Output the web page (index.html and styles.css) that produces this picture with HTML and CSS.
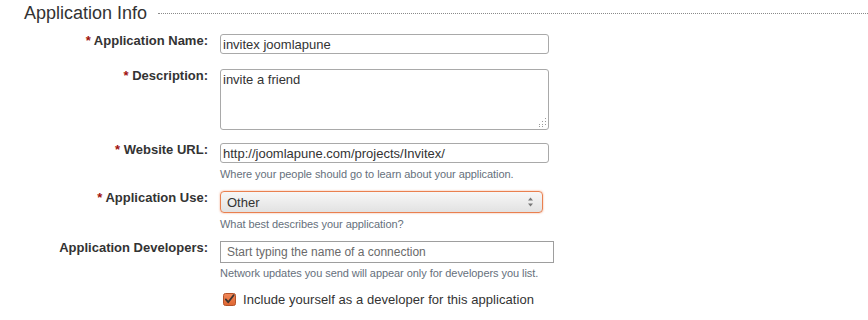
FILE: index.html
```html
<!DOCTYPE html>
<html>
<head>
<meta charset="utf-8">
<link rel="stylesheet" href="styles.css">
</head>
<body>
<div class="page">
  <div class="legend"><span class="legend-text">Application Info</span><span class="legend-line"></span></div>

  <div class="row r1">
    <div class="label"><span class="req">*</span> Application Name:</div>
    <div class="field"><input class="text w329" type="text" value="invitex joomlapune"></div>
  </div>

  <div class="row r2">
    <div class="label"><span class="req">*</span> Description:</div>
    <div class="field">
      <div class="ta-wrap">
        <textarea class="ta">invite a friend</textarea>
        <svg class="grip" width="10" height="10" viewBox="0 0 10 10">
          <g fill="#9a9a9a">
            <rect x="8" y="0" width="1" height="1"/>
            <rect x="5" y="3" width="1" height="1"/><rect x="8" y="3" width="1" height="1"/>
            <rect x="2" y="6" width="1" height="1"/><rect x="5" y="6" width="1" height="1"/><rect x="8" y="6" width="1" height="1"/>
            <rect x="2" y="8" width="1" height="1"/><rect x="5" y="8" width="1" height="1"/>
          </g>
        </svg>
      </div>
    </div>
  </div>

  <div class="row r3">
    <div class="label"><span class="req">*</span> Website URL:</div>
    <div class="field">
      <input class="text w329" type="text" value="http://joomlapune.com/projects/Invitex/">
      <div class="help">Where your people should go to learn about your application.</div>
    </div>
  </div>

  <div class="row r4">
    <div class="label"><span class="req">*</span> Application Use:</div>
    <div class="field">
      <div class="select">
        <span class="select-val">Other</span>
        <svg class="arrows" width="7" height="12" viewBox="0 0 7 12">
          <path d="M3.5 1.5 L6 4.5 L1 4.5 Z" fill="#777"/>
          <path d="M3.5 10.5 L6 7.5 L1 7.5 Z" fill="#777"/>
        </svg>
      </div>
      <div class="help">What best describes your application?</div>
    </div>
  </div>

  <div class="row r5">
    <div class="label">Application Developers:</div>
    <div class="field">
      <input class="dev" type="text" placeholder="Start typing the name of a connection">
      <div class="help h5">Network updates you send will appear only for developers you list.</div>
    </div>
  </div>

  <div class="row r6">
    <div class="spacer"></div>
    <div class="check-field">
      <svg class="cb" width="13" height="13" viewBox="0 0 13 13">
        <defs>
          <linearGradient id="cbg" x1="0" y1="0" x2="0" y2="1">
            <stop offset="0" stop-color="#f2895a"/>
            <stop offset="1" stop-color="#de6530"/>
          </linearGradient>
        </defs>
        <rect x="0.5" y="0.5" width="12" height="12" rx="2" fill="url(#cbg)" stroke="#b4532a"/>
        <path d="M2.8 6.4 L5.2 9.2 L10.6 2.2" fill="none" stroke="#3c3430" stroke-width="1.8" stroke-linecap="round" stroke-linejoin="round"/>
      </svg>
      <span class="check-text">Include yourself as a developer for this application</span>
    </div>
  </div>
</div>
</body>
</html>
```

FILE: styles.css
```css
html, body {
  margin: 0;
  padding: 0;
  background: #fff;
}
body {
  font-family: "Liberation Sans", Arial, sans-serif;
  color: #333;
}
.page {
  width: 868px;
}
.legend {
  display: flex;
  align-items: center;
  padding-top: 2px;
  padding-left: 24px;
  height: 22px;
}
.legend-text {
  font-size: 18px;
  line-height: 22px;
  color: #333;
  white-space: nowrap;
}
.legend-line {
  flex: 1;
  margin-left: 11px;
  border-top: 1px dotted #8a8a8a;
  height: 0;
}
.row {
  display: flex;
  align-items: flex-start;
}
.r1 { margin-top: 10px; }
.r2 { margin-top: 15px; }
.r3 { margin-top: 13px; }
.r4 { margin-top: 10px; }
.r5 { margin-top: 10px; }
.r6 { margin-top: 12px; }

.label {
  width: 208px;
  flex: none;
  text-align: right;
  font-size: 13px;
  font-weight: bold;
  line-height: 16px;
  margin-top: -1px;
  color: #333;
  white-space: nowrap;
}
.req {
  color: #a0100c;
}
.field {
  margin-left: 12px;
  display: flex;
  flex-direction: column;
}
.text {
  box-sizing: border-box;
  height: 20px;
  border: 1px solid #a9a9a9;
  border-radius: 3px;
  padding: 0 2px;
  margin: 0;
  font-family: "Liberation Sans", Arial, sans-serif;
  font-size: 13px;
  color: #333;
  background: #fff;
  outline: none;
}
.w329 { width: 329px; }
.ta-wrap {
  position: relative;
  width: 329px;
  height: 61px;
}
.ta {
  box-sizing: border-box;
  display: block;
  width: 329px;
  height: 61px;
  border: 1px solid #a9a9a9;
  border-radius: 3px;
  padding: 2px 2px;
  margin: 0;
  font-family: "Liberation Sans", Arial, sans-serif;
  font-size: 13px;
  line-height: 15px;
  color: #333;
  resize: none;
  outline: none;
}
.grip {
  position: absolute;
  right: 2px;
  bottom: 2px;
}
.help {
  margin-top: 4px;
  font-size: 11px;
  line-height: 14px;
  letter-spacing: -0.06px;
  color: #66707c;
  white-space: nowrap;
}
.h5 { margin-top: 3px; }
.select {
  box-sizing: border-box;
  width: 323px;
  height: 22px;
  border: 1px solid #e9804f;
  border-radius: 4px;
  box-shadow: 0 0 2px rgba(233, 120, 70, 0.7);
  background: linear-gradient(#f7f7f7, #e2e2e2);
  display: flex;
  align-items: center;
  justify-content: space-between;
  padding: 0 8px 0 6px;
}
.select-val {
  font-size: 13px;
  color: #333;
}
.arrows {
  display: block;
}
.dev {
  box-sizing: border-box;
  width: 334px;
  height: 22px;
  border: 1px solid #9e9e9e;
  border-radius: 0;
  padding: 0 6px;
  margin: 0;
  font-family: "Liberation Sans", Arial, sans-serif;
  font-size: 12px;
  color: #333;
  outline: none;
  background: #fff;
}
.dev::placeholder {
  color: #6a6a6a;
  opacity: 1;
}
.spacer {
  width: 223px;
  flex: none;
}
.check-field {
  display: flex;
  align-items: center;
}
.cb {
  display: block;
  margin-top: -1px;
}
.check-text {
  margin-left: 7px;
  font-size: 13px;
  line-height: 16px;
  letter-spacing: 0.05px;
  color: #333;
}
```
